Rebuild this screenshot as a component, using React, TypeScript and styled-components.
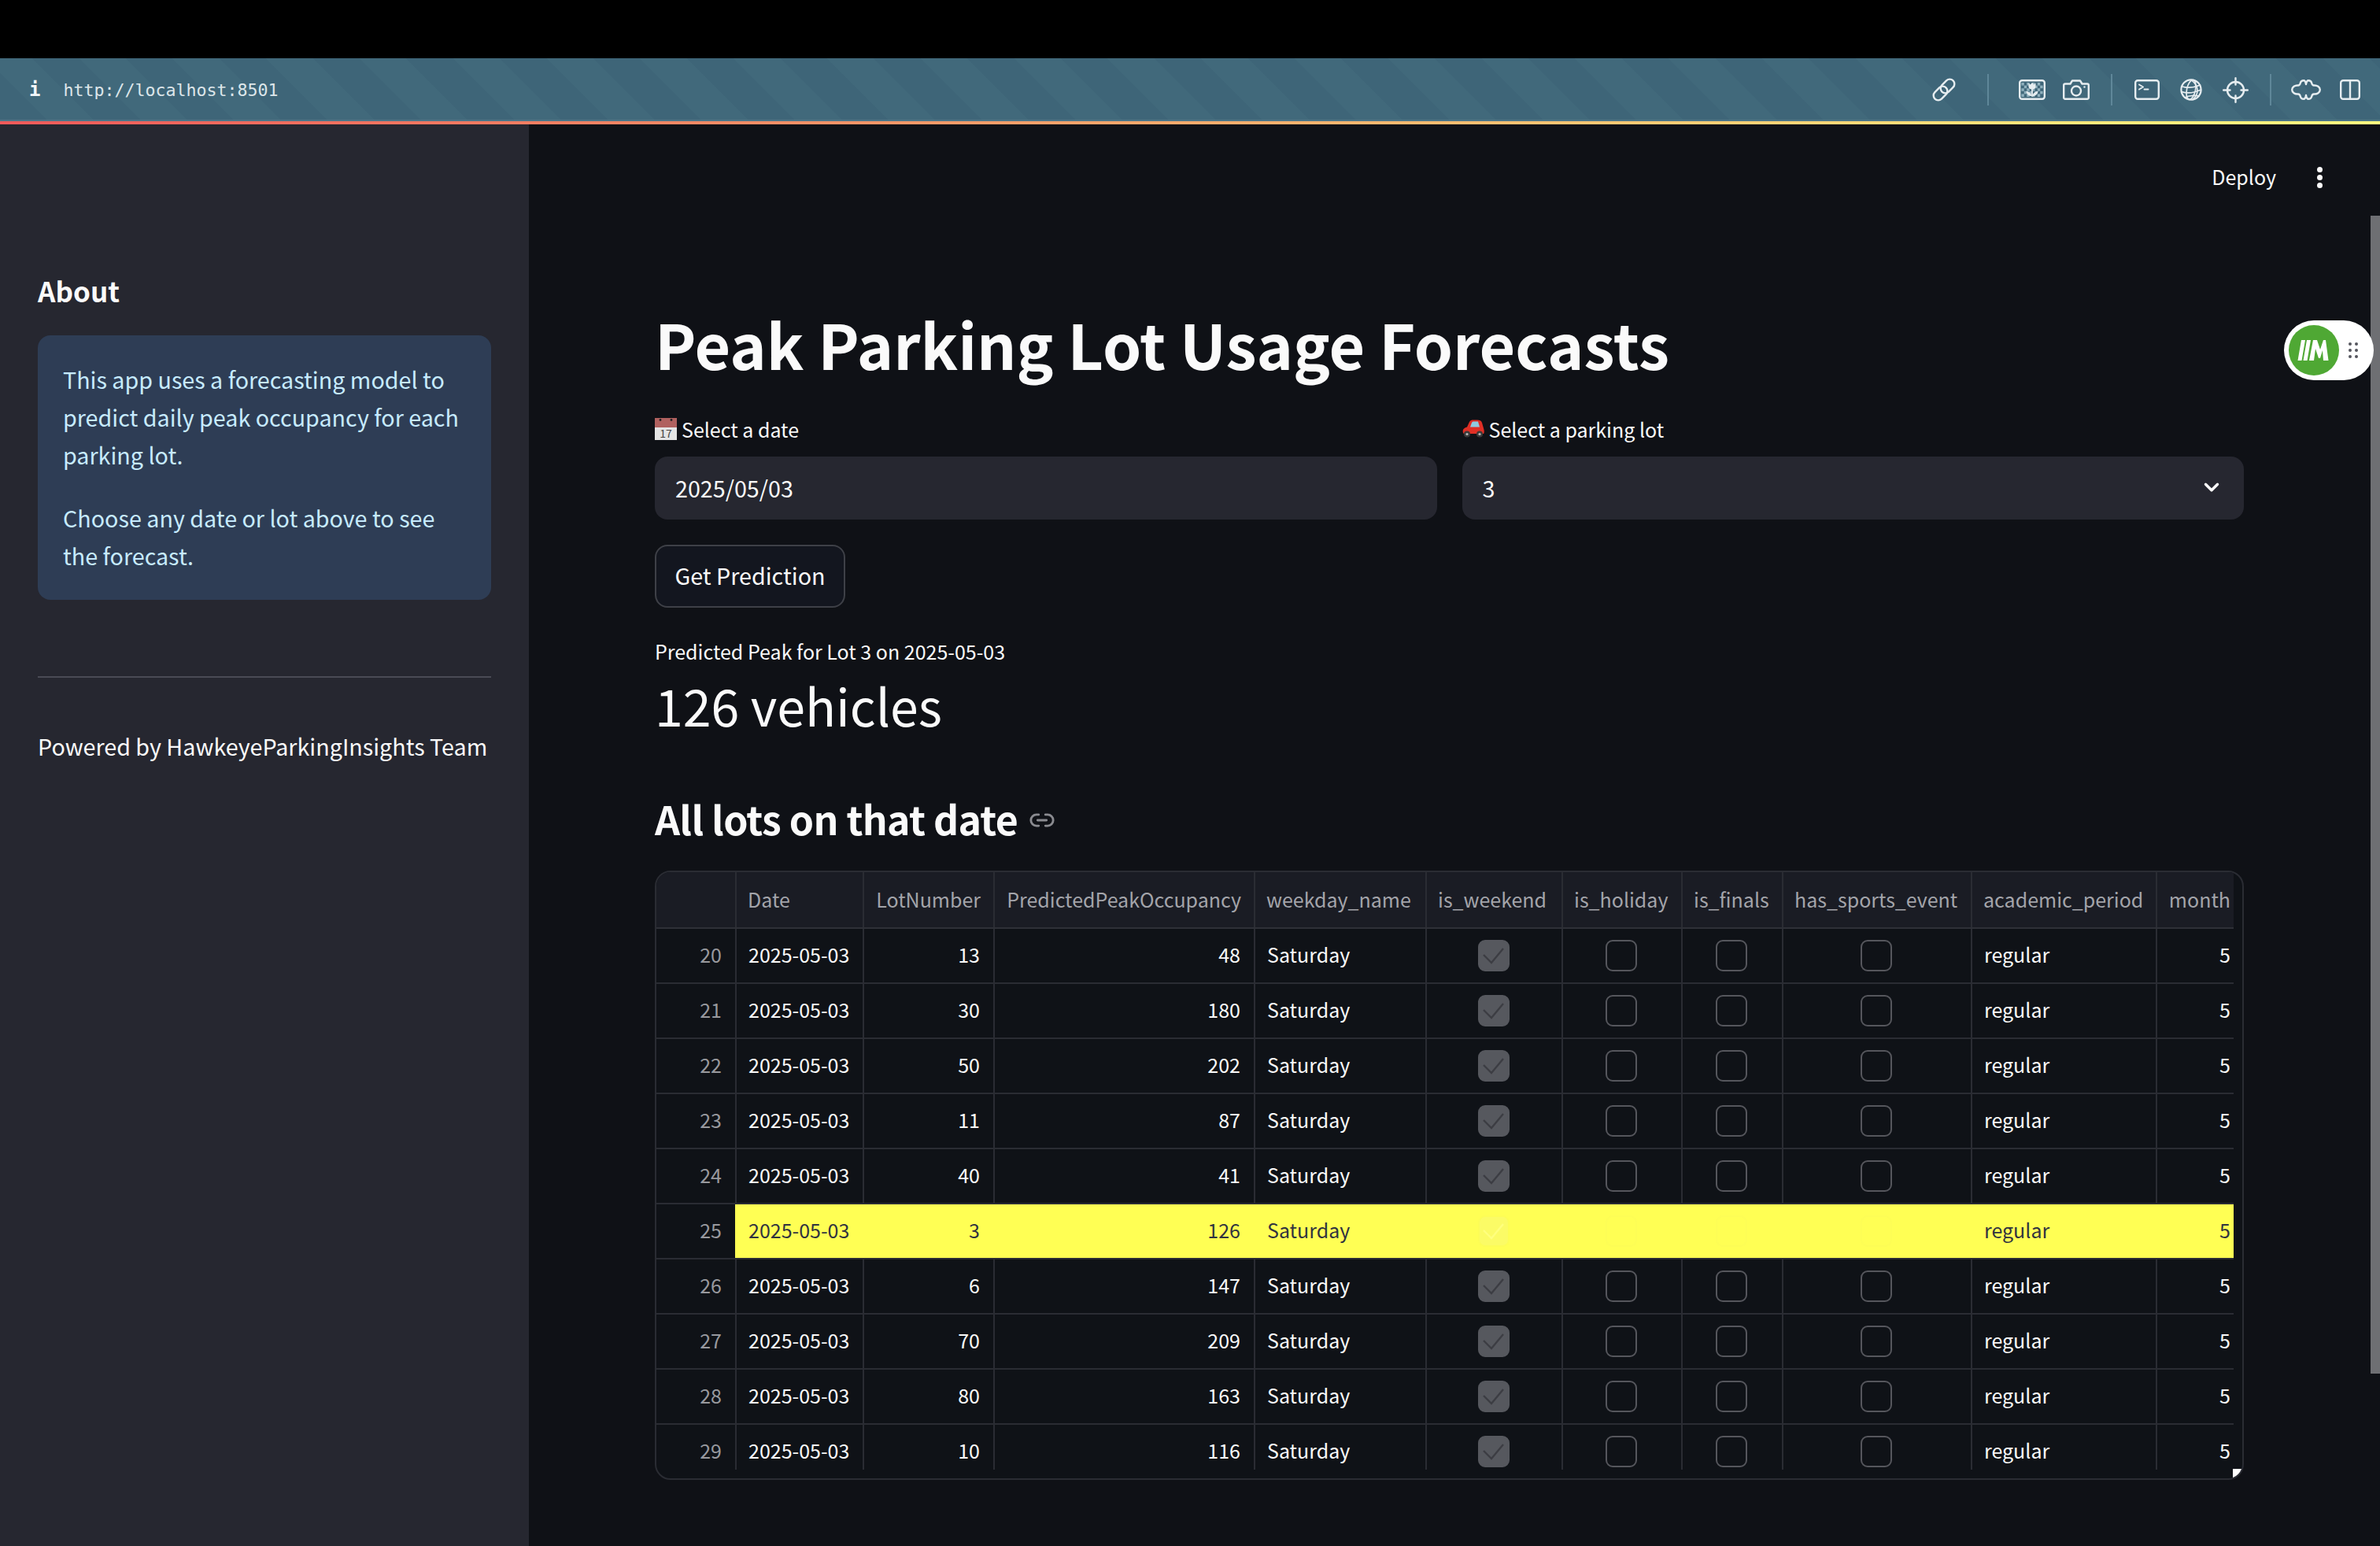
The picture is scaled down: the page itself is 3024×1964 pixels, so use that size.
import { createGlobalStyle, styled } from 'styled-components';
import { ChevronDown, Link2 } from 'lucide-react';

const FONT = `"Noto Sans CJK JP", "Noto Sans", sans-serif`;
const COLUMNS = '102px 162px 166px 331px 218px 173px 152px 128px 240px 235px 97px';

const GlobalStyle = createGlobalStyle`
  html, body {
    margin: 0;
    padding: 0;
    background: #0f1116;
    overflow: hidden;
  }
  * {
    box-sizing: border-box;
  }
`;

const ROWS = [
  { id: 20, lot: 13, peak: 48 },
  { id: 21, lot: 30, peak: 180 },
  { id: 22, lot: 50, peak: 202 },
  { id: 23, lot: 11, peak: 87 },
  { id: 24, lot: 40, peak: 41 },
  { id: 25, lot: 3, peak: 126 },
  { id: 26, lot: 6, peak: 147 },
  { id: 27, lot: 70, peak: 209 },
  { id: 28, lot: 80, peak: 163 },
  { id: 29, lot: 10, peak: 116 }
];

const HEADERS: [string, 'left' | 'right'][] = [
  ['', 'left'],
  ['Date', 'left'],
  ['LotNumber', 'right'],
  ['PredictedPeakOccupancy', 'right'],
  ['weekday_name', 'left'],
  ['is_weekend', 'left'],
  ['is_holiday', 'left'],
  ['is_finals', 'left'],
  ['has_sports_event', 'left'],
  ['academic_period', 'left'],
  ['month', 'right']
];

function Svg({ w, h, children }: { w: number; h: number; children: React.ReactNode }) {
  return (
    <svg width={w} height={h} viewBox={`0 0 ${w} ${h}`} fill="none" stroke="#e6edf0" strokeWidth="2.4" strokeLinecap="round" strokeLinejoin="round">
      {children}
    </svg>
  );
}

function LinkIcon() {
  return (
    <Svg w={30} h={30}>
      <rect x="13.5" y="0.5" width="12" height="20" rx="6" transform="rotate(45 19.5 10.5)" />
      <rect x="4.5" y="9.5" width="12" height="20" rx="6" transform="rotate(45 10.5 19.5)" />
    </Svg>
  );
}

function TulipIcon() {
  const squares = [];
  for (let y = 0; y < 5; y++) {
    for (let x = 0; x < 8; x++) {
      if ((x + y) % 2 === 0) squares.push(<rect key={`${x}-${y}`} x={3.4 + x * 3.4} y={4 + y * 3.6} width="3.4" height="3.6" fill="#8fb0bd" stroke="none" />);
    }
  }
  return (
    <Svg w={34} h={26}>
      <rect x="1.2" y="1.2" width="31.6" height="23.6" rx="3" />
      {squares}
      <path d="M12.5 4.5 L14.8 6.5 L17 4 L19.2 6.5 L21.5 4.5 V9 C21.5 11.5 19.5 12.5 17 12.5 C14.5 12.5 12.5 11.5 12.5 9 Z" fill="#e6edf0" stroke="none" />
      <path d="M17 12 V21" strokeWidth="1.8" />
      <path d="M9.5 15 C13 15 16 17.5 16.5 21 C13 21 10 19 9.5 15 Z M24.5 15 C21 15 18 17.5 17.5 21 C21 21 24 19 24.5 15 Z" fill="#e6edf0" stroke="none" />
    </Svg>
  );
}

function CameraIcon() {
  return (
    <Svg w={34} h={26}>
      <path d="M3 5.5 H9.5 L12 1.5 H22 L24.5 5.5 H31 A1.8 1.8 0 0 1 32.8 7.3 V23 A1.8 1.8 0 0 1 31 24.8 H3 A1.8 1.8 0 0 1 1.2 23 V7.3 A1.8 1.8 0 0 1 3 5.5 Z" />
      <circle cx="17" cy="14.5" r="6" />
      <circle cx="27.5" cy="9.5" r="1.2" fill="#e6edf0" stroke="none" />
    </Svg>
  );
}

function TerminalIcon() {
  return (
    <Svg w={32} h={26}>
      <rect x="1.2" y="1.2" width="29.6" height="23.6" rx="3" />
      <path d="M6 6.5 L11 9.5 L6 12.5" strokeWidth="2" />
      <path d="M12.5 12.5 H17.5" strokeWidth="2" />
    </Svg>
  );
}

function GlobeIcon() {
  return (
    <Svg w={28} h={28}>
      <g strokeWidth="1.7">
        <circle cx="14" cy="14" r="12.6" strokeWidth="2.2" />
        <ellipse cx="14" cy="14" rx="5.5" ry="12.6" transform="rotate(12 14 14)" />
        <path d="M14 1.4 C20 6 22 10 22 15 C22 20 19 24 16 26.5" />
        <path d="M2.6 10 C9 12 18 11 25.5 8" />
        <path d="M1.8 16.5 C9 19 18 18 26.4 14" />
        <path d="M6 24 C12 21 20 21 24 22" />
      </g>
    </Svg>
  );
}

function CrosshairIcon() {
  return (
    <Svg w={33} h={33}>
      <circle cx="16.5" cy="16.5" r="10.5" />
      <path d="M16.5 1.2 V9.5 M16.5 23.5 V31.8 M1.2 16.5 H9.5 M23.5 16.5 H31.8" />
    </Svg>
  );
}

function PuzzleIcon() {
  return (
    <Svg w={38} h={26}>
      <path d="M1.2 13 C1.2 9.5 5 7 9 7.5 C11 7.5 11.5 6 12 4 C12.5 2 14 1.2 16 1.2 C18 1.2 18.5 3 19 6 C19.5 3 20 1.2 22 1.2 C24 1.2 25.5 2 26 4 C26.5 6 27 7.5 29 7.5 C33 7 36.8 9.5 36.8 13 C36.8 16.5 33 19 29 18.5 C27 18.5 26.5 20 26 22 C25.5 24 24 24.8 22 24.8 C20 24.8 19.5 23 19 20 C18.5 23 18 24.8 16 24.8 C14 24.8 12.5 24 12 22 C11.5 20 11 18.5 9 18.5 C5 19 1.2 16.5 1.2 13 Z" />
    </Svg>
  );
}

function SplitIcon() {
  return (
    <Svg w={26} h={26}>
      <rect x="1.2" y="1.2" width="23.6" height="23.6" rx="3" />
      <path d="M13 1.2 V24.8" />
    </Svg>
  );
}

function CalendarEmoji() {
  return (
    <EmojiSvg width="28" height="28" viewBox="0 0 28 28">
      <rect width="28" height="28" fill="#e4e4e4" />
      <rect width="28" height="12" fill="#b0615f" />
      <circle cx="7" cy="2.5" r="1.4" fill="#222" />
      <circle cx="21" cy="2.5" r="1.4" fill="#222" />
      <text x="14" y="25" textAnchor="middle" fontSize="14" fontFamily={FONT} fill="#444">
        17
      </text>
    </EmojiSvg>
  );
}

function CarEmoji() {
  return (
    <EmojiSvg width="28" height="24" viewBox="0 0 28 24">
      <path d="M1 17 C0 12 2 11 6 9.5 L9 3 C10 1 12 0.5 14 0.5 H19 C22 0.5 24 1 25 4 L27 11 C28 14 28 17 27 18 H2 Z" fill="#df2f25" />
      <path d="M10 9.5 L12 4 C12.5 2.8 13.5 2.5 15 2.5 H20 L22 9.5 Z" fill="#8ecae0" />
      <circle cx="6" cy="18.5" r="4" fill="#3a3a3a" />
      <circle cx="6" cy="18.5" r="1.6" fill="#b8b8b8" />
      <circle cx="22" cy="18.5" r="4" fill="#3a3a3a" />
      <circle cx="22" cy="18.5" r="1.6" fill="#b8b8b8" />
    </EmojiSvg>
  );
}

function Check({ checked, highlight }: { checked: boolean; highlight: boolean }) {
  return (
    <CheckBox $checked={checked} $highlight={highlight}>
      {checked && (
        <svg width="36" height="36" viewBox="0 0 36 36" fill="none" stroke={highlight ? '#ffff7e' : '#3c3d43'} strokeWidth="2.4">
          <path d="M5 17 L15 27 L30 9" />
        </svg>
      )}
    </CheckBox>
  );
}

function DataTable() {
  return (
    <TableFrame>
      <TableBody>
        <HeaderRow>
          {HEADERS.map(([label, align], index) => (
            <HeaderCell key={index} $align={align}>
              {label}
            </HeaderCell>
          ))}
        </HeaderRow>
        {ROWS.map((row) => {
          const highlight = row.id === 25;
          return (
            <BodyRow key={row.id}>
              <IndexCell>{row.id}</IndexCell>
              <DateCell $highlight={highlight}>2025-05-03</DateCell>
              <Cell $highlight={highlight} $align="right">
                {row.lot}
              </Cell>
              <Cell $highlight={highlight} $align="right">
                {row.peak}
              </Cell>
              <Cell $highlight={highlight}>Saturday</Cell>
              <CheckCell $highlight={highlight}>
                <Check checked highlight={highlight} />
              </CheckCell>
              <CheckCell $highlight={highlight}>
                <Check checked={false} highlight={highlight} />
              </CheckCell>
              <CheckCell $highlight={highlight}>
                <Check checked={false} highlight={highlight} />
              </CheckCell>
              <CheckCell $highlight={highlight}>
                <Check checked={false} highlight={highlight} />
              </CheckCell>
              <Cell $highlight={highlight}>regular</Cell>
              <MonthCell $highlight={highlight}>5</MonthCell>
            </BodyRow>
          );
        })}
      </TableBody>
      <ResizeHandle viewBox="0 0 12 12" width="12" height="12">
        <path d="M0 0 H12 C12 6 7 11 0 12 Z" fill="#fff" />
      </ResizeHandle>
    </TableFrame>
  );
}

export default function App() {
  return (
    <Page>
      <GlobalStyle />
      <BlackBar />
      <Toolbar>
        <Address>
          <InfoMark>i</InfoMark>
          <Url>http://localhost:8501</Url>
        </Address>
        <ToolButton><LinkIcon /></ToolButton>
        <ToolSeparator $wide />
        <ToolButton><TulipIcon /></ToolButton>
        <ToolButton><CameraIcon /></ToolButton>
        <ToolSeparator />
        <ToolButton><TerminalIcon /></ToolButton>
        <ToolButton><GlobeIcon /></ToolButton>
        <ToolButton><CrosshairIcon /></ToolButton>
        <ToolSeparator />
        <ToolButton><PuzzleIcon /></ToolButton>
        <ToolButton><SplitIcon /></ToolButton>
      </Toolbar>
      <Decoration />
      <Workspace>
        <Sidebar>
          <SideTitle>About</SideTitle>
          <InfoBox>
            <p>This app uses a forecasting model to predict daily peak occupancy for each parking lot.</p>
            <p>Choose any date or lot above to see the forecast.</p>
          </InfoBox>
          <Divider />
          <Powered>Powered by HawkeyeParkingInsights Team</Powered>
        </Sidebar>
        <Main>
          <MainHeader>
            <DeployText>Deploy</DeployText>
            <KebabDots>
              <i />
              <i />
              <i />
            </KebabDots>
          </MainHeader>
          <Content>
            <Title>Peak Parking Lot Usage Forecasts</Title>
            <Fields>
              <Field>
                <FieldLabel>
                  <CalendarEmoji />
                  Select a date
                </FieldLabel>
                <InputBox>2025/05/03</InputBox>
              </Field>
              <Field>
                <FieldLabel>
                  <CarEmoji />
                  Select a parking lot
                </FieldLabel>
                <InputBox>
                  3
                  <ChevronDown size={30} color="#fafafa" strokeWidth={2.8} />
                </InputBox>
              </Field>
            </Fields>
            <PredictButton>Get Prediction</PredictButton>
            <MetricLabel>Predicted Peak for Lot 3 on 2025-05-03</MetricLabel>
            <MetricValue>126 vehicles</MetricValue>
            <SectionTitle>
              All lots on that date
              <Link2 size={34} color="#8a8b90" strokeWidth={2} />
            </SectionTitle>
            <DataTable />
          </Content>
        </Main>
      </Workspace>
      <Scrollbar />
      <FloatingPill>
        <svg width="64" height="64" viewBox="0 0 64 64">
          <circle cx="32" cy="32" r="32" fill="#4fa834" />
          <path d="M11.5 45 L16 19 H21 L16.5 45 Z M18.5 45 L23 19 H28 L23.5 45 Z" fill="#fff" />
          <path d="M26 45 L31 19 H36 L40 31 L44 19 H47 L50.5 45 H44 L43 32 L40 42 H38 L34 30 L32 45 Z" fill="#fff" />
        </svg>
        <Grip>
          {[0, 1, 2, 3, 4, 5].map((n) => (
            <i key={n} />
          ))}
        </Grip>
      </FloatingPill>
    </Page>
  );
}

const Page = styled.div`
  position: relative;
  width: 3024px;
  height: 1964px;
  overflow: hidden;
  display: flex;
  flex-direction: column;
  background: #0f1116;
  color: #fafafa;
  font-family: ${FONT};
`;

const BlackBar = styled.div`
  height: 74px;
  background: #000;
`;

const Toolbar = styled.div`
  height: 80px;
  display: flex;
  align-items: center;
  padding: 2px 10px 0 37px;
  border-bottom: 2px solid #4d7688;
  background: repeating-linear-gradient(
    45deg,
    #3e6578 0 42px,
    #41697b 42px 84px
  );
`;

const Address = styled.div`
  flex: 1;
  display: flex;
  align-items: center;
  gap: 29px;
`;

const InfoMark = styled.span`
  font-family: "DejaVu Sans Mono", monospace;
  font-weight: 700;
  font-size: 24px;
  color: #f2f6f8;
`;

const Url = styled.span`
  font-family: "DejaVu Sans Mono", monospace;
  font-size: 21.6px;
  color: #dde6ea;
`;

const ToolButton = styled.div`
  width: 56px;
  height: 56px;
  display: flex;
  align-items: center;
  justify-content: center;
`;

const ToolSeparator = styled.div<{ $wide?: boolean }>`
  width: 2px;
  height: 40px;
  margin: 0 ${(props) => (props.$wide ? '27px' : '16px')};
  background: #5f8799;
`;

const Decoration = styled.div`
  height: 4px;
  background: linear-gradient(90deg, #f05a5a, #fffd80);
`;

const Workspace = styled.div`
  flex: 1;
  display: flex;
  min-height: 0;
`;

const Sidebar = styled.aside`
  width: 672px;
  flex: none;
  padding: 187px 48px 0;
  background: #262730;
`;

const SideTitle = styled.h3`
  margin: 0 0 33px;
  font-size: 35px;
  line-height: 48px;
  font-weight: 600;
  color: #fafafa;
`;

const InfoBox = styled.div`
  padding: 32px;
  border-radius: 16px;
  background: #2e3d55;
  color: #c7ebff;
  font-size: 28.7px;
  line-height: 48px;

  p {
    margin: 0 0 32px;
  }
  p:last-child {
    margin: 0;
  }
`;

const Divider = styled.hr`
  margin: 97px 0 63px;
  border: none;
  height: 2px;
  background: #4a4b55;
`;

const Powered = styled.div`
  font-size: 28.7px;
  line-height: 48px;
  white-space: nowrap;
`;

const Main = styled.main`
  flex: 1;
  min-width: 0;
  display: flex;
  flex-direction: column;
`;

const MainHeader = styled.header`
  height: 136px;
  flex: none;
  display: flex;
  align-items: center;
  justify-content: flex-end;
  gap: 43px;
  padding: 0 65px 4px 0;
`;

const DeployText = styled.span`
  font-size: 25px;
  line-height: 36px;
`;

const KebabDots = styled.div`
  width: 24px;
  display: flex;
  flex-direction: column;
  align-items: center;
  gap: 3px;
  margin-top: 2px;

  i {
    width: 7px;
    height: 7px;
    border-radius: 50%;
    background: #fafafa;
  }
`;

const Content = styled.div`
  padding: 92px 173px 0 160px;
`;

const Title = styled.h1`
  margin: 0 0 43px;
  font-size: 78.8px;
  line-height: 100px;
  font-weight: 700;
  white-space: nowrap;
`;

const Fields = styled.div`
  display: grid;
  grid-template-columns: 1fr 1fr;
  gap: 32px;
`;

const Field = styled.div`
  min-width: 0;
`;

const FieldLabel = styled.label`
  display: flex;
  align-items: center;
  gap: 6px;
  height: 32px;
  margin-bottom: 19px;
  font-size: 25px;
`;

const EmojiSvg = styled.svg`
  flex: none;
`;

const InputBox = styled.div`
  height: 80px;
  display: flex;
  align-items: center;
  justify-content: space-between;
  padding: 0 26px 2px 26px;
  border-radius: 16px;
  background: #262730;
  font-size: 28.7px;
`;

const PredictButton = styled.button`
  display: block;
  width: 242px;
  height: 80px;
  margin-top: 32px;
  padding: 0 0 3px;
  border: 2px solid #3e4047;
  border-radius: 16px;
  background: #13161f;
  color: #fafafa;
  font-family: ${FONT};
  font-size: 28.7px;
`;

const MetricLabel = styled.div`
  margin-top: 37px;
  font-size: 25px;
  line-height: 36px;
`;

const MetricValue = styled.div`
  margin-top: 5px;
  font-size: 64.5px;
  line-height: 90px;
`;

const SectionTitle = styled.h2`
  display: flex;
  align-items: center;
  gap: 16px;
  margin: 64px 0 32px;
  font-size: 50px;
  letter-spacing: -0.7px;
  line-height: 70px;
  font-weight: 600;
  white-space: nowrap;

  svg {
    margin: 6px 0 0 -2px;
  }
`;

const TableFrame = styled.div`
  position: relative;
  height: 774px;
  border: 2px solid #2a2c33;
  border-radius: 20px;
  overflow: hidden;
  background: #0f1217;
`;

const TableBody = styled.div`
  width: 2004px;
  height: 759px;
  overflow: hidden;
  font-size: 25px;
`;

const HeaderRow = styled.div`
  display: grid;
  grid-template-columns: ${COLUMNS};
  height: 72px;
  border-bottom: 2px solid #2e3037;
  background: #1a1c24;
`;

const BodyRow = styled.div`
  display: grid;
  grid-template-columns: ${COLUMNS};
  height: 70px;
  border-bottom: 2px solid #2a2c33;
`;

const HeaderCell = styled.div<{ $align: string }>`
  display: flex;
  align-items: center;
  justify-content: ${(props) => (props.$align === 'right' ? 'flex-end' : 'flex-start')};
  padding: 0 16px 2px 14px;
  border-right: 2px solid #2a2c33;
  color: #a3a4aa;
  white-space: nowrap;

  &:last-child {
    border-right: none;
    padding-right: 4px;
  }
`;

const IndexCell = styled.div`
  display: flex;
  align-items: center;
  justify-content: flex-end;
  padding: 0 17px 4px 0;
  border-right: 2px solid #2a2c33;
  color: #98999e;
`;

const Cell = styled.div<{ $highlight?: boolean; $align?: string }>`
  display: flex;
  align-items: center;
  justify-content: ${(props) => (props.$align === 'right' ? 'flex-end' : 'flex-start')};
  padding: 0 17px 4px 15px;
  white-space: nowrap;
  border-right: 2px solid ${(props) => (props.$highlight ? '#ffff54' : '#2a2c33')};
  background: ${(props) => (props.$highlight ? '#ffff54' : 'transparent')};
  color: ${(props) => (props.$highlight ? '#31333f' : '#fafafa')};
`;

const DateCell = styled(Cell)`
  margin-left: ${(props) => (props.$highlight ? '-2px' : '0')};
  padding-left: ${(props) => (props.$highlight ? '17px' : '15px')};
`;

const CheckCell = styled(Cell)`
  justify-content: center;
  padding: 0 2px 0 0;
`;

const MonthCell = styled(Cell)`
  justify-content: flex-end;
  padding-right: 4px;
  border-right: none;
`;

const CheckBox = styled.div<{ $checked: boolean; $highlight: boolean }>`
  width: 40px;
  height: 40px;
  display: flex;
  align-items: center;
  justify-content: center;
  border-radius: 9px;
  border: 2px solid
    ${(props) => (props.$highlight ? '#fdfd56' : props.$checked ? '#56585e' : '#55565c')};
  background: ${(props) =>
    props.$checked ? (props.$highlight ? '#fbfb66' : '#56585e') : 'transparent'};
`;

const ResizeHandle = styled.svg`
  position: absolute;
  right: 0;
  bottom: 0;
`;

const Scrollbar = styled.div`
  position: absolute;
  top: 274px;
  right: 0;
  width: 12px;
  height: 1471px;
  background: #6e6f73;
`;

const FloatingPill = styled.div`
  position: absolute;
  top: 407px;
  left: 2902px;
  width: 114px;
  height: 76px;
  display: flex;
  align-items: center;
  gap: 12px;
  padding-left: 6px;
  border-radius: 38px;
  background: #fff;
`;

const Grip = styled.div`
  display: grid;
  grid-template-columns: 4px 4px;
  gap: 4px;

  i {
    width: 4px;
    height: 4px;
    border-radius: 50%;
    background: #55565e;
  }
`;
